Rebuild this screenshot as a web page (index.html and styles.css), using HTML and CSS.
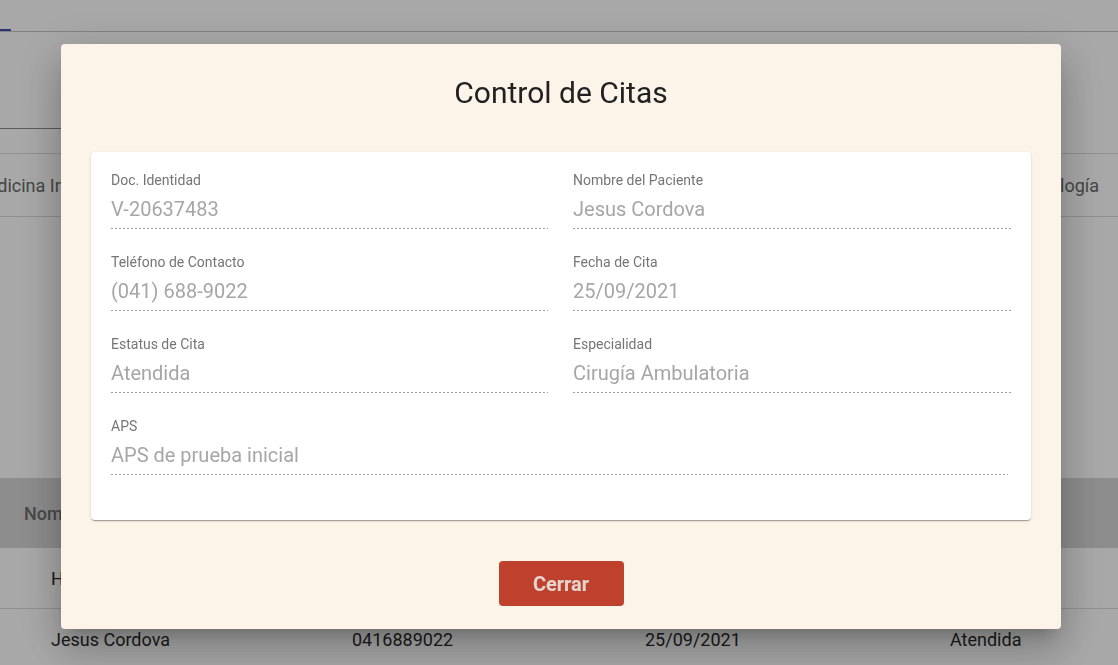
FILE: index.html
```html
<!DOCTYPE html>
<html lang="es">
<head>
<meta charset="utf-8">
<title>Control de Citas</title>
<link rel="stylesheet" href="styles.css">
</head>
<body>
<div class="page">
  <div class="tabs"><span class="tab-ink"></span></div>
  <div class="filters"><div class="search-field"></div></div>
  <div class="specialties">
    <div class="spec-list">
      <span class="spec">Medicina Interna</span>
      <span class="spec">Pediatría</span>
      <span class="spec">Cardiología</span>
    </div>
  </div>
  <div class="spacer"></div>
  <div class="table">
    <div class="thead">
      <span>Nombre</span><span>Teléfono</span><span>Fecha</span><span>Estatus</span>
    </div>
    <div class="trow">
      <span>Hector Perez</span><span>0414555123</span><span>24/09/2021</span><span>Pendiente</span>
    </div>
    <div class="trow">
      <span>Jesus Cordova</span><span>0416889022</span><span>25/09/2021</span><span>Atendida</span>
    </div>
  </div>
</div>

<div class="overlay"></div>

<div class="modal">
  <h1 class="modal-title">Control de Citas</h1>
  <div class="card">
    <div class="grid">
      <div class="field">
        <div class="label">Doc. Identidad</div>
        <div class="value">V-20637483</div>
      </div>
      <div class="field">
        <div class="label">Nombre del Paciente</div>
        <div class="value">Jesus Cordova</div>
      </div>
      <div class="field">
        <div class="label">Teléfono de Contacto</div>
        <div class="value">(041) 688-9022</div>
      </div>
      <div class="field">
        <div class="label">Fecha de Cita</div>
        <div class="value">25/09/2021</div>
      </div>
      <div class="field">
        <div class="label">Estatus de Cita</div>
        <div class="value">Atendida</div>
      </div>
      <div class="field">
        <div class="label">Especialidad</div>
        <div class="value">Cirugía Ambulatoria</div>
      </div>
      <div class="field wide">
        <div class="label">APS</div>
        <div class="value">APS de prueba inicial</div>
      </div>
    </div>
  </div>
  <div class="actions">
    <button class="btn-close" type="button">Cerrar</button>
  </div>
</div>
</body>
</html>
```

FILE: styles.css
```css
* { box-sizing: border-box; }

html, body {
  margin: 0;
  padding: 0;
  height: 100%;
  overflow: hidden;
  background: #ffffff;
  font-family: Roboto, "Noto Sans", "Liberation Sans", sans-serif;
}

.page {
  width: 1118px;
  height: 665px;
  overflow: hidden;
}

.tabs {
  height: 32px;
  display: flex;
  align-items: flex-end;
  border-bottom: 1px solid #c6c6c6;
}
.tab-ink {
  width: 11px;
  height: 2px;
  background: #3f51b5;
}

.filters {
  height: 97px;
  display: flex;
  align-items: flex-end;
}
.search-field {
  width: 320px;
  height: 1px;
  background: #8a8a8a;
}

.specialties {
  margin-top: 24px;
  height: 64px;
  border-top: 1px solid #dadada;
  border-bottom: 1px solid #dadada;
  overflow: hidden;
}
.spec-list {
  height: 100%;
  display: flex;
  align-items: center;
  justify-content: space-between;
  margin-left: -28px;
  margin-right: 19px;
  font-size: 18px;
  color: #6a6a6a;
}

.spacer { height: 261px; }

.table { font-size: 18px; }
.thead {
  height: 70px;
  background: #d6d6d6;
  display: grid;
  grid-template-columns: 328px 293px 305px 1fr;
  align-items: center;
  padding-left: 24px;
  color: #6e6e6e;
  font-weight: 500;
}
.trow {
  height: 61px;
  display: grid;
  grid-template-columns: 301px 293px 305px 1fr;
  align-items: center;
  padding-left: 51px;
  color: #2a2a2a;
  border-bottom: 1px solid #dcdcdc;
}

.overlay {
  position: fixed;
  inset: 0;
  background: rgba(0, 0, 0, 0.34);
}

.modal {
  position: fixed;
  top: 44px;
  left: 61px;
  width: 1000px;
  height: 585px;
  padding: 31px 30px 23px;
  background: #fcf4e9;
  border-radius: 4px;
  box-shadow: 0 11px 15px -7px rgba(0,0,0,.2),
              0 24px 38px 3px rgba(0,0,0,.14),
              0 9px 46px 8px rgba(0,0,0,.12);
}

.modal-title {
  margin: 0;
  text-align: center;
  font-size: 30px;
  line-height: 35px;
  font-weight: 400;
  color: #212121;
}

.card {
  margin-top: 42px;
  background: #ffffff;
  border-radius: 4px;
  padding: 20px 20px 45px;
  box-shadow: 0 2px 1px -1px rgba(0,0,0,.2),
              0 1px 1px 0 rgba(0,0,0,.14),
              0 1px 3px 0 rgba(0,0,0,.12);
}

.grid {
  display: grid;
  grid-template-columns: 437px 438px;
  column-gap: 25px;
  row-gap: 25px;
}
.field.wide {
  grid-column: 1 / -1;
  margin-right: 3px;
}

.label {
  font-size: 14px;
  line-height: 16px;
  color: #757575;
  margin-bottom: 9px;
}
.value {
  font-size: 20px;
  line-height: 24px;
  color: #a6a6a6;
  background-image: repeating-linear-gradient(to right, #a0a0a0 0 2px, transparent 2px 4px);
  background-size: 100% 1px;
  background-repeat: no-repeat;
  background-position: left bottom;
  padding-bottom: 8px;
}

.actions {
  margin-top: 41px;
  display: flex;
  justify-content: center;
}
.btn-close {
  width: 125px;
  height: 45px;
  border: none;
  border-radius: 4px;
  background: #c0402e;
  color: #e3d6ce;
  font-family: Roboto, "Noto Sans", "Liberation Sans", sans-serif;
  font-size: 20px;
  font-weight: 700;
  cursor: pointer;
}
```
